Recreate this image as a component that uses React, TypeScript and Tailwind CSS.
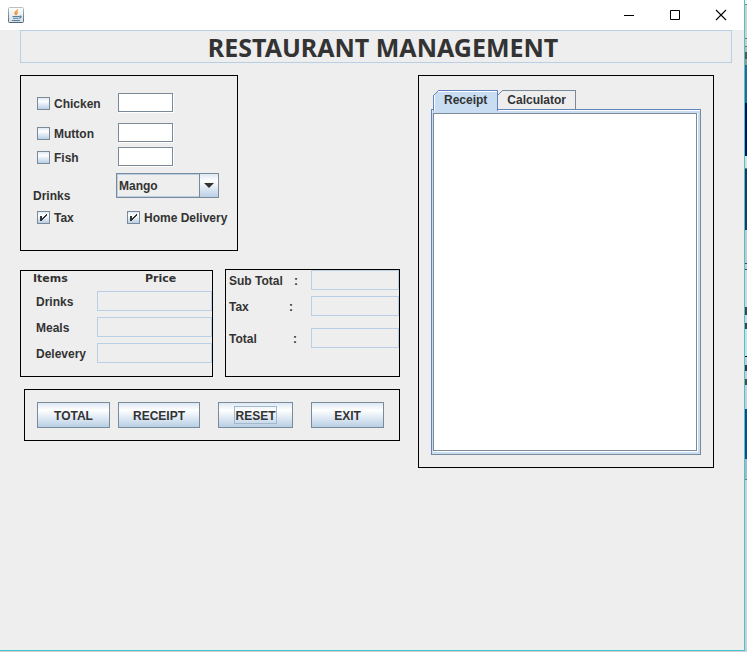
import { useState } from "react";

const face = "bg-linear-to-b from-[#dde8f3] via-white via-30% to-[#b8cfe5]";

function CheckItem({ label, initial = false }: { label: string; initial?: boolean }) {
  const [checked, setChecked] = useState(initial);
  return (
    <label className="flex items-center gap-1">
      <span className="relative size-[13px]">
        <input
          type="checkbox"
          checked={checked}
          onChange={() => setChecked(!checked)}
          className={"block size-[13px] appearance-none border border-[#7a8a99] " + face}
        />
        {checked && (
          <svg className="pointer-events-none absolute inset-0" width="13" height="13" viewBox="0 0 13 13">
            <path d="M3 5h2v2h1v-1h1v-1h1v-1h1v-1h1v2h-1v1h-1v1h-1v1h-1v1h-1v1h-2z" fill="#333" shapeRendering="crispEdges" />
          </svg>
        )}
      </span>
      <span className="pt-[2px]">{label}</span>
    </label>
  );
}

function MealRow({ label }: { label: string }) {
  return (
    <div className="flex h-5 items-start pl-1">
      <div className="w-[81px] pt-[2px]">
        <CheckItem label={label} />
      </div>
      <input
        aria-label={label + " quantity"}
        className="h-[19px] w-[55px] border border-[#7a8a99] bg-white px-1 shadow-[1px_1px_0_#fff] outline-none"
      />
    </div>
  );
}

function OutputRow({ label }: { label: string }) {
  return (
    <label className="flex h-5 items-center pl-[15px]">
      <span className="w-[61px] pt-[2px]">{label}</span>
      <input readOnly className="h-5 min-w-0 flex-1 border border-[#b8cfe5] bg-transparent outline-none" />
    </label>
  );
}

function SumRow({ label, labelWidth }: { label: string; labelWidth: string }) {
  return (
    <label className="flex h-5 items-center pl-[3px]">
      <span className="flex w-[82px] shrink-0 pt-[2px]">
        <span className={labelWidth}>{label}</span>:
      </span>
      <input readOnly className="h-5 min-w-0 flex-1 border border-[#b8cfe5] bg-transparent outline-none" />
    </label>
  );
}

function ActionButton({ label, width, focused = false }: { label: string; width: string; focused?: boolean }) {
  return (
    <button className={"flex h-[26px] items-center justify-center border border-[#7a8a99] " + face + " " + width}>
      <span className={focused ? "border border-[#a3b8cc] pt-[2px]" : "pt-[2px]"}>{label}</span>
    </button>
  );
}

function JavaIcon() {
  return (
    <svg width="16" height="16" viewBox="0 0 16 16">
      <defs>
        <linearGradient id="tile" x1="0" y1="0" x2="0" y2="1">
          <stop offset="0" stopColor="#fff" />
          <stop offset="1" stopColor="#d6dee4" />
        </linearGradient>
        <linearGradient id="rim" x1="0" y1="0" x2="0" y2="1">
          <stop offset="0" stopColor="#b4bfc8" />
          <stop offset="1" stopColor="#4a667c" />
        </linearGradient>
      </defs>
      <rect x=".5" y=".5" width="15" height="15" rx="1" fill="url(#tile)" stroke="url(#rim)" />
      <path d="M9.500 2.500C10 4 6.500 4.600 7 6.200C7.200 7 8 7.300 8 8.200M10 5C8.500 5.600 8.500 6.400 9 7.500" fill="none" stroke="#ee8a20" strokeWidth="1.300" />
      <path d="M4.500 9.500H11.500M5 11.300H10.500M4 13.500H12M11.500 9.200C14 8.600 13.600 11 11 11.300" fill="none" stroke="#527f9e" strokeWidth="1.100" />
    </svg>
  );
}

function Tab({ label, active, onClick }: { label: string; active: boolean; onClick: () => void }) {
  const line = active ? "#6382bf" : "#7a8a99";
  return (
    <button
      role="tab"
      aria-selected={active}
      onClick={onClick}
      className={
        active
          ? "relative z-10 h-[21px] border border-b-0 border-[#6382bf] bg-[#c8ddf2] px-[10px] pb-[3px] shadow-[inset_1px_1px_0_#fff]"
          : "relative -ml-px h-5 border border-b-0 border-[#7a8a99] px-[9px] pb-[2px]"
      }
    >
      <svg className="absolute -top-px -left-px" width="6" height="6" viewBox="0 0 6 6">
        <path d="M0 0H6L0 6Z" fill="#eee" />
        <path d="M0 6L6 0" stroke={line} />
      </svg>
      {label}
    </button>
  );
}

const behind = [
  ["h-1 bg-[#f0f0f0]", "h-px bg-[#888]", "h-[33px] bg-[#d0d0d0]", "h-px bg-[#777]", "h-[7px] bg-[#ccc]", "h-px bg-[#777]"],
  ["h-[5px] bg-[#bbb]", "h-[7px] bg-[#555]", "h-[6px] bg-[#999]", "h-[38px] bg-[#2c6597]", "h-[53px] bg-[#00105f]"],
  ["h-3 bg-[#ddd]", "h-px bg-[#777]", "h-[61px] bg-[#203766]", "h-[33px] bg-[#c8c8cc]", "h-px bg-[#334478]", "h-[5px] bg-[#ccc]", "h-px bg-[#334478]"],
  ["h-[37px] bg-[#d5d5da]", "h-2 bg-[#44424e]", "h-2 bg-[#d0d4de]", "h-1.5 bg-[#44424e]", "h-[27px] bg-[#cde]", "h-px bg-black", "h-2 bg-[#ccd]"],
  ["h-1.5 bg-[#335]", "h-2 bg-[#ccd]", "h-1.5 bg-[#544]", "h-6 bg-[#ccd]", "h-[50px] bg-[#17488a]", "h-5 bg-[#aab6cc]", "h-px bg-[#777]"],
].flat();

export default function App() {
  const [tab, setTab] = useState("Receipt");
  return (
    <div className="flex min-h-screen bg-[#d0d0d4] pb-px font-['Liberation_Sans',Arial,sans-serif] text-[12px] leading-[14px] font-bold text-[#333]">
      <div className="min-w-0 flex-1 border-r border-b border-[#42c8ca] bg-[#eee]">
        <header className="flex h-[30px] items-center justify-between bg-white pr-[17px] pb-px pl-2">
          <JavaIcon />
          <div className="flex items-center gap-[34px] text-black">
            <button aria-label="Minimize">
              <svg width="12" height="12" viewBox="0 0 12 12"><path d="M1 6.500H11" stroke="currentColor" /></svg>
            </button>
            <button aria-label="Maximize">
              <svg width="12" height="12" viewBox="0 0 12 12"><path d="M1.500 1.500H10.500V10.500H1.500Z" fill="none" stroke="currentColor" /></svg>
            </button>
            <button aria-label="Close">
              <svg width="12" height="12" viewBox="0 0 12 12"><path d="M1 1L11 11M11 1L1 11" stroke="currentColor" strokeWidth="1.100" /></svg>
            </button>
          </div>
        </header>

        <h1 className="mr-3 ml-5 h-[33px] border border-[#b8cfe5] pl-[14px] text-center font-['Noto_Sans','Open_Sans',sans-serif] text-[25px] leading-8">
          RESTAURANT MANAGEMENT
        </h1>

        <main className="mt-3 mr-[30px] ml-5 flex items-start gap-[18px]">
          <div className="w-[380px] shrink-0">
            <section className="h-[176px] w-[218px] border border-black pt-[17px] pl-3">
              <div className="flex flex-col">
                <MealRow label="Chicken" />
                <div className="mt-[10px] mb-1">
                  <MealRow label="Mutton" />
                </div>
                <MealRow label="Fish" />
              </div>
              <div className="mt-[6px] flex h-[30px]">
                <label htmlFor="drink" className="w-[83px] self-end">
                  Drinks
                </label>
                <div className="relative h-[25px] w-[103px]">
                  <select
                    id="drink"
                    className="h-[25px] w-full appearance-none border border-[#7a8a99] bg-[#eee] pl-[2px] shadow-[inset_1px_1px_0_#b8cfe5,inset_0_-1px_0_#b8cfe5] outline-none"
                  >
                    <option>Mango</option>
                  </select>
                  <span className={"pointer-events-none absolute inset-y-0 right-0 flex w-5 items-center justify-center border border-[#7a8a99] " + face}>
                    <svg width="10" height="5" viewBox="0 0 10 5"><path d="M0 0H10L5 5Z" fill="#333" /></svg>
                  </span>
                </div>
              </div>
              <div className="mt-[6px] flex pl-1">
                <div className="w-[90px]">
                  <CheckItem label="Tax" initial />
                </div>
                <CheckItem label="Home Delivery" initial />
              </div>
            </section>

            <div className="mt-[18px] flex items-end gap-3">
              <section className="h-[107px] w-[193px] border border-black">
                <div className="flex h-5 pt-px pl-3 font-['DejaVu_Sans',sans-serif] text-[11px]">
                  <span className="w-28">Items</span>
                  <span>Price</span>
                </div>
                <div className="flex flex-col gap-[6px]">
                  <OutputRow label="Drinks" />
                  <OutputRow label="Meals" />
                  <OutputRow label="Delevery" />
                </div>
              </section>
              <section className="h-[108px] min-w-0 flex-1 border border-black">
                <div className="flex flex-col gap-[6px]">
                  <SumRow label="Sub Total" labelWidth="w-[65px]" />
                  <SumRow label="Tax" labelWidth="w-[60px]" />
                  <div className="mt-[6px]">
                    <SumRow label="Total" labelWidth="w-16" />
                  </div>
                </div>
              </section>
            </div>

            <section className="mt-3 ml-1 flex h-[52px] border border-black pt-3 pl-3">
              <ActionButton label="TOTAL" width="mr-2 w-[73px]" />
              <ActionButton label="RECEIPT" width="mr-[18px] w-[82px]" />
              <ActionButton label="RESET" width="mr-[18px] w-[75px]" focused />
              <ActionButton label="EXIT" width="w-[73px]" />
            </section>
          </div>

          <section className="h-[393px] min-w-0 flex-1 border border-black pt-[14px] pr-3 pl-3">
            <div role="tablist" className="flex h-[19px] items-start pl-[2px]">
              <Tab label="Receipt" active={tab === "Receipt"} onClick={() => setTab("Receipt")} />
              <Tab label="Calculator" active={tab === "Calculator"} onClick={() => setTab("Calculator")} />
            </div>
            <div className="flex h-[346px] border border-[#6382bf] border-r-[#7a8a99] border-b-[#7a8a99] bg-[#c8ddf2] pt-[3px] pr-[2px] pb-[2px] pl-px shadow-[inset_0_1px_0_#fff]">
              <div className="flex flex-1 bg-white pr-px pb-px">
                <textarea aria-label="Receipt text" className="flex-1 resize-none border border-[#7a8a99] bg-white p-1 outline-none" />
              </div>
            </div>
          </section>
        </main>
      </div>
      <div className="w-[2px] shrink-0">
        {behind.map((band, i) => (
          <div key={i} className={band} />
        ))}
      </div>
    </div>
  );
}
